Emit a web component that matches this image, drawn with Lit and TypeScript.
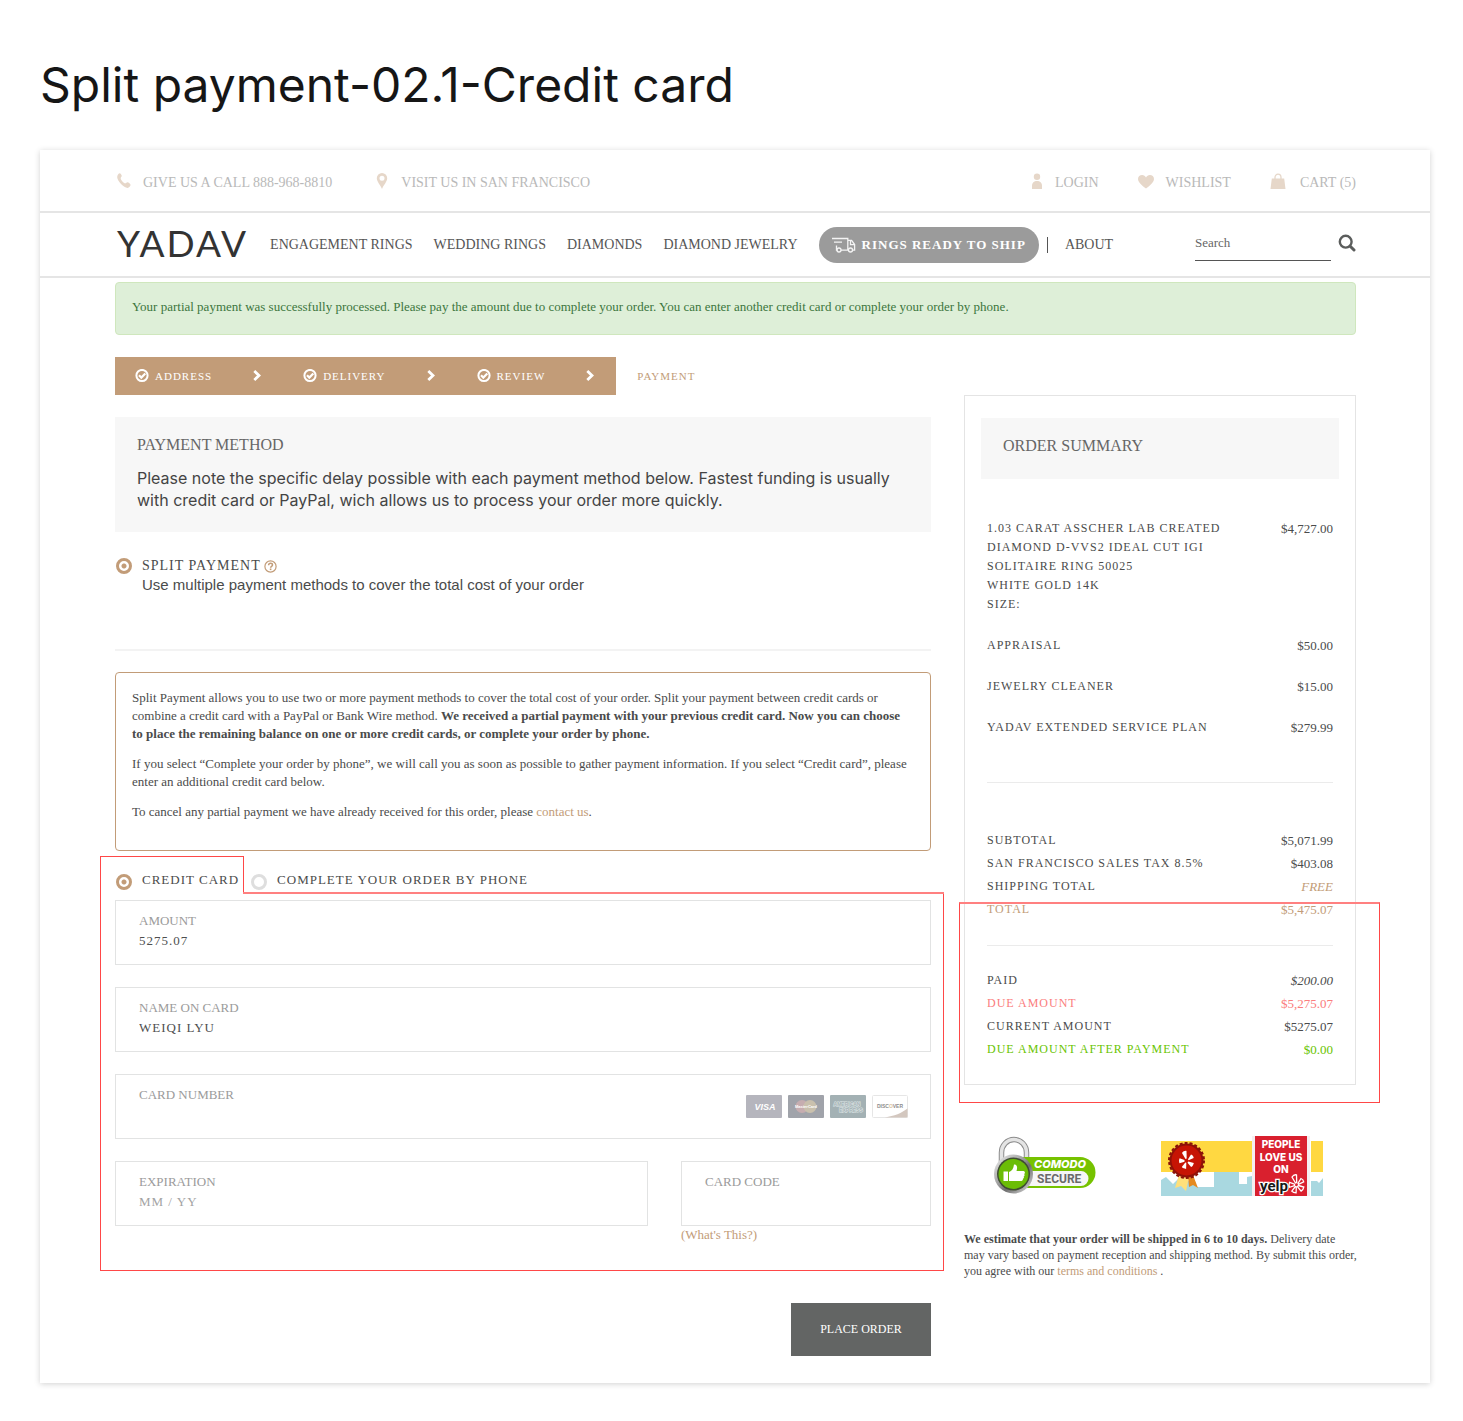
import { LitElement, html, svg, css } from "lit";
import { customElement, property } from "lit/decorators.js";
import { classMap } from "lit/directives/class-map.js";

const phoneIcon = html`<svg class="icon" width="16" height="16" viewBox="-1 0 16 16" aria-hidden="true">
  <path fill="currentColor" d="M1.6 2.200C2.200 .9 3 .2 3.700.2c.8 0 2.100 1.700 2.100 2.900 0 .9-1.300 1.300-1.100 2.300.3 1.600 3 4.600 4.500 4.900.9.200 1.300-1 2.200-1.100 1-.1 3.300 1.700 3.200 2.800-.1.900-1.500 2.800-3 2.900C8 15 1.300 8.300 1.200 4.300c0-.7.100-1.500.4-2.100z"/></svg>`;
const pinIcon = html`<svg class="icon" width="14" height="16" viewBox="-1 0 14 16" aria-hidden="true">
  <path fill="currentColor" fill-rule="evenodd" d="M6 0a5.200 5.200 0 0 0-5.200 5.200C.8 8.800 4.400 11.700 6 16c1.600-4.300 5.200-7.200 5.200-10.800A5.200 5.200 0 0 0 6 0zm0 2.700a2.500 2.500 0 1 1 0 5 2.500 2.500 0 0 1 0-5z"/></svg>`;
const userIcon = html`<svg class="icon" width="12" height="16" viewBox="0 0 12 16" aria-hidden="true">
  <circle cx="6" cy="3.800" r="3.200" fill="currentColor"/><path fill="currentColor" d="M1 16v-3.200C1 10 3 8 6 8s5 2 5 4.800V16z"/></svg>`;
const heartIcon = html`<svg class="icon" width="16" height="16" viewBox="0 0 16 16" aria-hidden="true">
  <path fill="currentColor" d="M8 15.600C4.500 12.500 0 9.500 0 5.900 0 3.500 1.900 2 4.100 2 5.900 2 7.200 2.900 8 4.400 8.800 2.900 10.100 2 11.900 2 14.100 2 16 3.500 16 5.900c0 3.600-4.500 6.600-8 9.700z"/></svg>`;
const bagIcon = html`<svg class="icon" width="18" height="16" viewBox="0 0 18 16" aria-hidden="true">
  <path fill="currentColor" d="M1.800 5.500h12.400L15.500 16H.5z"/>
  <path fill="none" stroke="currentColor" stroke-width="1.300" d="M5 7V4.500a3 3.300 0 0 1 6 0V7"/></svg>`;
const truckIcon = html`<svg width="24" height="16" viewBox="0 0 24 16" aria-hidden="true" fill="none" stroke="#f4f4f4" stroke-width="1.300">
  <path d="M0 1.500h15.800v11.700M2 5.200h8M4.500 8.500v4.700h1M9 13.200h7M15.800 3.300h3.800l3 4.200v5.700h-1.800M18.500 3.500v4.200h4" />
  <circle cx="7" cy="13" r="2"/><circle cx="18.500" cy="13" r="2"/></svg>`;
const searchIcon = html`<svg width="18" height="18" viewBox="0 0 18 18" aria-hidden="true" fill="none" stroke="#5b5d5c">
  <circle cx="7.700" cy="7.700" r="5.900" stroke-width="2.400"/><path d="M12.200 12.200l3.800 3.800" stroke-width="3" stroke-linecap="round"/></svg>`;
const checkIcon = html`<svg width="14" height="14" viewBox="0 0 14 14" aria-hidden="true" fill="none" stroke="#fff">
  <circle cx="7" cy="6.500" r="5.600" stroke-width="2"/><path d="M4 6.300l2.300 2.300 4-4.100" stroke-width="2.200"/></svg>`;
const chevronIcon = html`<svg class="chevron" width="8" height="12" viewBox="0 0 8 12" aria-hidden="true" fill="none" stroke="#fff">
  <path d="M1.300 1L6 5.500 1.300 10" stroke-width="2.800"/></svg>`;

@customElement("field-box")
export class FieldBox extends LitElement {
  static styles = css`
    :host { display: block; }
    .field {
      display: flex;
      align-items: center;
      justify-content: space-between;
      height: 63px;
      border: 1px solid #e2e3e3;
      padding: 0 22px 0 23px;
    }
    .stack { display: flex; flex-direction: column; flex: 1; height: 43px; min-width: 0; }
    label { font-size: 13px; line-height: 20px; color: #9b9b9b; }
    input {
      display: block;
      width: 100%;
      height: 20px;
      box-sizing: border-box;
      padding: 0;
      border: 0;
      outline: 0;
      background: none;
      font: 13px/20px "Liberation Serif", serif;
      letter-spacing: 1px;
      color: #4e4f4f;
    }
    input::placeholder { color: #a3a3a3; opacity: 1; }
  `;
  @property() label = "";
  @property() value = "";
  @property() hint = "";
  render() {
    return html`<div class="field">
      <div class="stack">
        <label for="control">${this.label}</label>
        <input id="control" .value=${this.value} placeholder=${this.hint} />
      </div>
      <slot></slot>
    </div>`;
  }
}

@customElement("card-brands")
export class CardBrands extends LitElement {
  static styles = css`
    :host { display: block; height: 24px; }
    .brands { display: flex; gap: 6px; }
    text { font-family: "Liberation Sans", sans-serif; font-weight: bold; }
  `;
  render() {
    return html`<div class="brands">
      <svg width="36" height="24" viewBox="0 0 36 24" role="img" aria-label="Visa">
        <rect width="36" height="23" rx="1" fill="#b5b5bd"/>
        <text x="19" y="15" font-size="9" font-style="italic" text-anchor="middle" fill="#fff">VISA</text>
      </svg>
      <svg width="36" height="24" viewBox="0 0 36 24" role="img" aria-label="MasterCard">
        <rect width="36" height="23" rx="1" fill="#a0a3aa"/>
        <circle cx="14" cy="11.500" r="6.500" fill="#c6adb0"/><circle cx="22" cy="11.500" r="6.500" fill="#c9c0ad"/>
        <text x="18" y="13" font-size="4" text-anchor="middle" fill="#fff">MasterCard</text>
      </svg>
      <svg width="36" height="24" viewBox="0 0 36 24" role="img" aria-label="American Express">
        <rect width="36" height="23" rx="1" fill="#a3b1b4"/>
        <text x="17" y="10.500" font-size="5" text-anchor="middle" fill="#a3b1b4" stroke="#dde5e6" stroke-width="1" paint-order="stroke">AMERICAN</text>
        <text x="21" y="16.500" font-size="5" text-anchor="middle" fill="#a3b1b4" stroke="#dde5e6" stroke-width="1" paint-order="stroke">EXPRESS</text>
      </svg>
      <svg width="36" height="24" viewBox="0 0 36 24" role="img" aria-label="Discover">
        <rect x=".5" y=".5" width="35" height="22" rx="1" fill="#fff" stroke="#e6e6e6"/>
        <path d="M13 22.500C22 21 30 18 35.500 13.500v9z" fill="#d3c7bf"/>
        <text x="18" y="13" font-size="5" text-anchor="middle" fill="#8d8d8d">DISC<tspan fill="#dcc3a0">O</tspan>VER</text>
      </svg>
    </div>`;
  }
}

const burst = (cx: number, cy: number, k: number, fill: string, edge: string) => svg`
  <g transform="translate(${cx} ${cy}) scale(${k})" fill=${fill} stroke=${edge} stroke-width="1.300">
    <path d="M-1 -1.500L-4.500 -7.500C-3.500 -9 -1.500 -10 0 -9.600L.2 -2z"/>
    <path d="M1.500 -1.200L4.500 -6C6 -5.500 7 -4 7.200 -2.600L2 -.2z"/>
    <path d="M1.800 1L7.300 2.500C7 4.500 6 5.800 4.600 6.600L1 2.200z"/>
    <path d="M-.2 2.300L-.4 8.400C-2.300 8.300 -3.800 7.600 -4.700 6.600L-1.200 2z"/>
    <path d="M-2 1.200L-7 2.800C-7.700 1 -7.600 -.6 -6.900 -2.200L-2 -.4z"/>
  </g>`;

@customElement("trust-badges")
export class TrustBadges extends LitElement {
  static styles = css`
    :host { display: block; }
    .badges { display: flex; gap: 64px; padding-left: 29px; }
    svg { display: block; flex: none; }
    .sans { font-family: "Roboto", "Liberation Sans", sans-serif; font-weight: 700; }
    .round { font-family: "Inter", sans-serif; font-weight: 800; }
  `;
  render() {
    return html`<div class="badges">
      <svg width="104" height="60" viewBox="0 0 104 60" role="img" aria-label="Comodo Secure">
        <defs>
          <linearGradient id="steel" x1="0" y1="0" x2="1" y2="1">
            <stop offset="0" stop-color="#f4f4f4"/><stop offset=".45" stop-color="#9a9a9a"/>
            <stop offset=".6" stop-color="#6f6f6f"/><stop offset="1" stop-color="#e6e6e6"/>
          </linearGradient>
        </defs>
        <path d="M8.500 30V16.500a12.500 13 0 0 1 25 0V30" fill="none" stroke="#8b8b8b" stroke-width="5.500"/>
        <path d="M8.500 30V16.500a12.500 13 0 0 1 25 0V30" fill="none" stroke="#e4e4e4" stroke-width="3.500"/>
        <path d="M20 21h67a15.500 15.500 0 0 1 0 31H20z" fill="#76c200"/>
        <path d="M36 35h52a7.500 7.500 0 0 1 0 15H34z" fill="#f6f6f6"/>
        <circle cx="20.500" cy="38" r="19.500" fill="url(#steel)"/>
        <circle cx="20.500" cy="38" r="16.500" fill="#3f4d33"/>
        <circle cx="20.500" cy="38" r="15" fill="#6bbd06"/>
        <path d="M10.500 35.500h4.500v9.500h-4.500zM16 36c3-1 4.500-3.500 5-7.500 3-.5 3.800 2.500 2.500 6.500h7c1.800.8 1.800 2.300.6 3 .8 1 .6 2-.4 2.500.5 1.200.2 2-.8 2.300.2 1.200-.2 2-1.500 2.200H16z" fill="#fff"/>
        <text class="round" x="41" y="32" font-size="11" font-style="italic" fill="#fff">COMODO</text>
        <text class="sans" x="44" y="47" font-size="12" fill="#6a6a6a">SECURE</text>
      </svg>
      <svg width="162" height="60" viewBox="0 0 162 60" role="img" aria-label="People love us on Yelp">
        <rect width="162" height="60" fill="#fff"/>
        <path d="M0 5h91v31H0zM150 5h12v31h-12z" fill="#ffd841"/>
        <path d="M0 44l5-3 7 7 5-5 6-1 13 9h17V36h25v12h8v-7l5-1v20H0zM150 45h6l2 2 4-5v18h-12z" fill="#a9d8e0"/>
        <path d="M18 39l-4 13 6-2 5 5 3-14z" fill="#ffe07a"/><path d="M27 40l1 11 4-2 5 3-5-13z" fill="#e58a1f"/>
        <circle cx="25.500" cy="24.500" r="17.500" fill="none" stroke="#8a1208" stroke-width="2" stroke-dasharray="3 2"/>
        <circle cx="25.500" cy="24.500" r="17" fill="#8f1108"/><circle cx="25.500" cy="24.500" r="15" fill="#c61404"/>
        ${burst(25.5, 24.5, 1, "#fff", "none")}
        <path d="M91 0h58v60H91z" fill="#f5eef0"/><path d="M94 0h52v60H94z" fill="#d9202e"/>
        <g class="round" font-size="10" text-anchor="middle" fill="#fff">
          <text x="120" y="12">PEOPLE</text><text x="120" y="24.500">LOVE US</text><text x="120" y="37">ON</text>
        </g>
        <text class="sans" x="99" y="55" font-size="15" fill="#171717" stroke="#fff" stroke-width="2.500" paint-order="stroke">yelp</text>
        ${burst(135.5, 48.5, 1, "#d9202e", "#fff")}
      </svg>
    </div>`;
  }
}

interface Row { name: string; amount: string; tone?: string; slant?: boolean; }

const totals: Row[] = [
  { name: "SUBTOTAL", amount: "$5,071.99" },
  { name: "SAN FRANCISCO SALES TAX 8.5%", amount: "$403.08" },
  { name: "SHIPPING TOTAL", amount: "FREE", tone: "free", slant: true },
  { name: "TOTAL", amount: "$5,475.07", tone: "gold" },
];
const payments: Row[] = [
  { name: "PAID", amount: "$200.00", slant: true },
  { name: "DUE AMOUNT", amount: "$5,275.07", tone: "due" },
  { name: "CURRENT AMOUNT", amount: "$5275.07" },
  { name: "DUE AMOUNT AFTER PAYMENT", amount: "$0.00", tone: "clear" },
];

@customElement("order-summary")
export class OrderSummary extends LitElement {
  static styles = css`
    :host { display: block; }
    .box { border: 1px solid #e4e4e4; padding: 22px 16px 23px; }
    h2 {
      margin: 0;
      padding: 17px 22px 22px;
      background: #f7f7f7;
      font-size: 16px;
      line-height: 22px;
      font-weight: 400;
      color: #666;
    }
    .body { padding: 40px 6px 0; position: relative; }
    table { width: 100%; border-collapse: collapse; }
    th, td { padding: 0; vertical-align: top; font-weight: 400; color: #4a4b4b; }
    th { text-align: left; font-size: 12px; letter-spacing: 1px; }
    td { text-align: right; font-size: 13px; }
    .items th, .items td { line-height: 19px; padding-bottom: 22px; }
    .sums th, .sums td { line-height: 23px; }
    .rule { height: 1px; border: 0; margin: 0; background: #ebebeb; }
    .first { margin: 23px 0 46px; }
    .second { margin: 24px 0 23px; }
    .gold th, .gold td, .free td { color: #c29c78; }
    .due th, .due td { color: #fb7d7d; }
    .clear th, .clear td { color: #69c400; }
    .slant td { font-style: italic; }
    .highlight {
      position: absolute;
      left: -22px;
      right: -41px;
      bottom: -42px;
      height: 201px;
      box-sizing: border-box;
      border: 1px solid #ff4747;
      border-top: 2px solid #ff8080;
      pointer-events: none;
    }
  `;
  private sums(rows: Row[]) {
    return html`<table class="sums"><tbody>${rows.map(
      (r) => html`<tr class=${classMap({ slant: !!r.slant, gold: r.tone === "gold", free: r.tone === "free", due: r.tone === "due", clear: r.tone === "clear" })}>
        <th scope="row">${r.name}</th><td>${r.amount}</td></tr>`
    )}</tbody></table>`;
  }
  render() {
    return html`<section class="box">
      <h2>ORDER SUMMARY</h2>
      <div class="body">
        <table class="items"><tbody>
          <tr><th scope="row">1.03 CARAT ASSCHER LAB CREATED<br />DIAMOND D-VVS2 IDEAL CUT IGI<br />SOLITAIRE RING 50025<br />WHITE GOLD 14K<br />SIZE:</th><td>$4,727.00</td></tr>
          <tr><th scope="row">APPRAISAL</th><td>$50.00</td></tr>
          <tr><th scope="row">JEWELRY CLEANER</th><td>$15.00</td></tr>
          <tr><th scope="row">YADAV EXTENDED SERVICE PLAN</th><td>$279.99</td></tr>
        </tbody></table>
        <hr class="rule first" />
        ${this.sums(totals)}
        <hr class="rule second" />
        ${this.sums(payments)}
        <div class="highlight"></div>
      </div>
    </section>`;
  }
}

@customElement("app-root")
export class AppRoot extends LitElement {
  static styles = css`
    :host {
      display: block;
      box-sizing: border-box;
      padding: 55px 33px 38px 40px;
      background: #fff;
      font-family: "Liberation Serif", serif;
      color: #4a4b4b;
    }
    a { color: inherit; text-decoration: none; }
    svg { display: block; flex: none; }
    .title { margin: 0 0 35px; font: 400 48px/60px "Inter", sans-serif; color: #161616; }
    .sheet { background: #fff; box-shadow: 0 1px 6px rgba(0, 0, 0, 0.18); padding-bottom: 27px; }
    .bar { display: flex; padding: 0 74px 0 75px; border-bottom: 2px solid #e5e5e5; }

    .utility { height: 38px; padding-top: 23px; justify-content: space-between; font-size: 14px; line-height: 20px; color: #b9b9b9; }
    .group { display: flex; gap: 43px; }
    .account { gap: 39px; }
    .group a { display: flex; gap: 12px; }
    .icon { color: #e6d7c9; }

    .main-nav { height: 63px; align-items: center; font-size: 14px; color: #555; }
    .logo { padding: 0 0 3px 2px; font: 400 37px/40px "Lato", sans-serif; letter-spacing: 2px; color: #333; }
    .links { display: flex; align-items: center; gap: 21px; margin-left: 22px; white-space: nowrap; }
    .pill { display: flex; align-items: center; gap: 6px; height: 36px; padding: 0 13px; border-radius: 18px; background: #9b9b9b; color: #fff; font-size: 13px; font-weight: 700; letter-spacing: 1px; }
    .about { border-left: 1px solid #555; padding-left: 17px; margin-left: -13px; line-height: 16px; }
    .search { display: flex; align-items: center; gap: 7px; margin: 0 0 3px auto; }
    .search input { width: 136px; height: 35px; box-sizing: border-box; padding: 0; border: 0; border-bottom: 1px solid #555; outline: 0; background: none; font: 13px "Liberation Serif", serif; color: #666; }
    .search input::placeholder { color: #666; opacity: 1; }
    .search button { border: 0; padding: 0; background: none; }

    .content { padding: 4px 74px 0 75px; }
    .alert { margin: 0; padding: 14px 16px 18px; border: 1px solid #cfe7bd; border-radius: 4px; background: #deefd8; color: #3c763d; font-size: 13px; line-height: 19px; }
    .steps { display: flex; margin: 22px 0 0; padding: 0; list-style: none; font-size: 11px; letter-spacing: 1px; line-height: 38px; color: #c29c78; }
    .steps a { display: flex; align-items: center; gap: 6px; height: 38px; }
    .done { background: #c29c78; color: #fff; padding: 0 22px 0 20px; }
    .chevron { margin-left: 35px; }
    .current { padding-left: 21px; }
    .columns { display: grid; grid-template-columns: 816fr 392fr; gap: 33px; align-items: start; }

    .intro { margin-top: 22px; padding: 17px 22px 21px; background: #f7f7f7; }
    .intro h2 { margin: 0 0 11px; font-size: 16px; line-height: 22px; font-weight: 400; color: #666; }
    .intro p { margin: 0; font: 400 16px/22px "Inter", sans-serif; color: #444; }
    .split { display: flex; gap: 10px; margin-top: 24px; padding-left: 1px; }
    .split label { display: flex; align-items: center; gap: 3px; font-size: 14px; line-height: 20px; letter-spacing: 1px; }
    .split p { margin: 0; font: 15px/18px "Liberation Sans", sans-serif; }
    input[type="radio"] { appearance: none; flex: none; box-sizing: border-box; width: 16px; height: 16px; margin: 2px 0 0; border: 3px solid #dedede; border-radius: 50%; }
    input[type="radio"]:checked { border-color: #c29c78; background: radial-gradient(circle, #c29c78 0 2px, #fff 3px); }
    .divider { height: 2px; border: 0; margin: 55px 0 21px; background: #f3f3f3; }
    .note { border: 1px solid #c29c78; border-radius: 4px; padding: 16px 16px 17px; font-size: 13px; line-height: 18px; }
    .note p { margin: 0 0 12px; }
    .link { color: #c29c78; }

    .pay { position: relative; }
    .methods { display: flex; gap: 12px; height: 30px; padding: 19px 0 0 1px; font-size: 13px; line-height: 20px; letter-spacing: 1px; }
    .methods label { display: flex; gap: 10px; }
    .methods input[type="radio"] { margin-top: 4px; }
    .fields { display: grid; grid-template-columns: 533fr 250fr; column-gap: 33px; row-gap: 22px; }
    .wide { grid-column: 1 / -1; }
    .help { display: block; font-size: 13px; line-height: 18px; color: #c29c78; }
    .tab, .frame, .edge { position: absolute; pointer-events: none; box-sizing: border-box; }
    .tab { left: -15px; width: 144px; top: 5px; height: 37px; border: 1px solid #ff4747; border-bottom: 0; }
    .frame { left: -15px; right: -13px; top: 42px; bottom: -27px; border: 1px solid #ff4747; border-top: 0; }
    .edge { left: 128px; right: -13px; top: 41px; height: 2px; background: #ff8080; }
    .submit { display: block; margin: 59px 0 0 auto; width: 140px; height: 53px; border: 0; background: #636564; color: #fff; font: 12px "Liberation Serif", serif; }

    .badges { margin-top: 51px; }
    .estimate { margin: 35px -6px 0 0; font-size: 12px; line-height: 16px; }
  `;

  render() {
    return html`
      <h1 class="title">Split payment-02.1-Credit card</h1>
      <div class="sheet">
        <header>
          <div class="bar utility">
            <div class="group">
              <a href="#call">${phoneIcon}GIVE US A CALL 888-968-8810</a>
              <a href="#visit">${pinIcon}VISIT US IN SAN FRANCISCO</a>
            </div>
            <div class="group account">
              <a href="#login">${userIcon}LOGIN</a>
              <a href="#wishlist">${heartIcon}WISHLIST</a>
              <a href="#cart">${bagIcon}CART (5)</a>
            </div>
          </div>
          <div class="bar main-nav">
            <a class="logo" href="#home">YADAV</a>
            <nav class="links">
              <a href="#engagement">ENGAGEMENT RINGS</a>
              <a href="#wedding">WEDDING RINGS</a>
              <a href="#diamonds">DIAMONDS</a>
              <a href="#jewelry">DIAMOND JEWELRY</a>
              <a class="pill" href="#ready">${truckIcon}RINGS READY TO SHIP</a>
              <a class="about" href="#about">ABOUT</a>
            </nav>
            <form class="search" role="search">
              <input type="search" aria-label="Search" placeholder="Search" />
              <button type="button" aria-label="Search">${searchIcon}</button>
            </form>
          </div>
        </header>
        <main class="content">
          <p class="alert" role="status">Your partial payment was successfully processed. Please pay the amount due to complete your order. You can enter another credit card or complete your order by phone.</p>
          <ol class="steps">
            ${["ADDRESS", "DELIVERY", "REVIEW"].map(
              (s) => html`<li class="done"><a href="#step">${checkIcon}${s}${chevronIcon}</a></li>`
            )}
            <li class="current" aria-current="step">PAYMENT</li>
          </ol>
          <div class="columns">
            <div>
              <section class="intro">
                <h2>PAYMENT METHOD</h2>
                <p>Please note the specific delay possible with each payment method below. Fastest funding is usually with credit card or PayPal, wich allows us to process your order more quickly.</p>
              </section>
              <div class="split">
                <input type="radio" id="split" name="plan" checked />
                <div>
                  <label for="split">SPLIT PAYMENT
                    <svg width="13" height="13" viewBox="0 0 13 13" aria-hidden="true" fill="none" stroke="#c29c78">
                      <circle cx="6.500" cy="6.500" r="5.600" stroke-width="1.200"/>
                      <path d="M4.600 5.200c0-1.300.8-1.900 1.900-1.900s2 .7 2 1.700c0 1.300-1.900 1.300-1.900 2.700" stroke-width="1.500"/>
                      <path d="M5.800 9.300h1.600" stroke-width="1.600"/>
                    </svg>
                  </label>
                  <p>Use multiple payment methods to cover the total cost of your order</p>
                </div>
              </div>
              <hr class="divider" />
              <section class="note">
                <p>Split Payment allows you to use two or more payment methods to cover the total cost of your order. Split your payment between credit cards or combine a credit card with a PayPal or Bank Wire method. <b>We received a partial payment with your previous credit card. Now you can choose to place the remaining balance on one or more credit cards, or complete your order by phone.</b></p>
                <p>If you select “Complete your order by phone”, we will call you as soon as possible to gather payment information. If you select “Credit card”, please enter an additional credit card below.</p>
                <p>To cancel any partial payment we have already received for this order, please <a class="link" href="#contact">contact us</a>.</p>
              </section>
              <form>
                <div class="pay">
                  <div class="methods">
                    <label><input type="radio" name="method" checked />CREDIT CARD</label>
                    <label><input type="radio" name="method" />COMPLETE YOUR ORDER BY PHONE</label>
                  </div>
                  <div class="fields">
                    <field-box class="wide" label="AMOUNT" value="5275.07"></field-box>
                    <field-box class="wide" label="NAME ON CARD" value="WEIQI LYU"></field-box>
                    <field-box class="wide" label="CARD NUMBER"><card-brands></card-brands></field-box>
                    <field-box label="EXPIRATION" hint="MM / YY"></field-box>
                    <div>
                      <field-box label="CARD CODE"></field-box>
                      <a class="help" href="#code">(What's This?)</a>
                    </div>
                  </div>
                  <div class="tab"></div>
                  <div class="frame"></div>
                  <div class="edge"></div>
                </div>
                <button class="submit" type="button">PLACE ORDER</button>
              </form>
            </div>
            <aside>
              <order-summary></order-summary>
              <trust-badges class="badges"></trust-badges>
              <p class="estimate"><b>We estimate that your order will be shipped in 6 to 10 days.</b> Delivery date<br />may vary based on payment reception and shipping method. By submit this order,<br />you agree with our <a class="link" href="#terms">terms and conditions</a> .</p>
            </aside>
          </div>
        </main>
      </div>
    `;
  }
}
